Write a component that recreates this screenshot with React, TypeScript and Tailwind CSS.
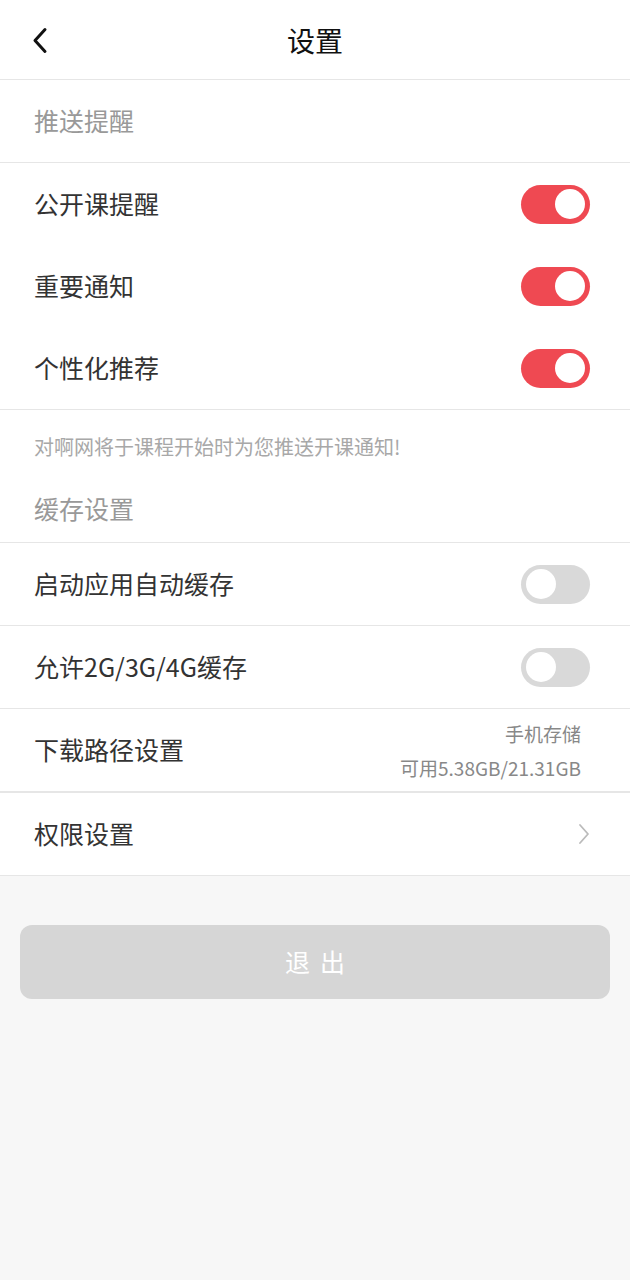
import React from 'react';

const FONT = { fontFamily: '"Noto Sans CJK SC", "Noto Sans", sans-serif' };

function Toggle({ on }: { on: boolean }) {
  return (
    <div
      className={`w-[69px] h-[39px] rounded-full flex items-center px-[5px] shrink-0 ${
        on ? 'bg-[#ef4952] justify-end' : 'bg-[#d9d9d9] justify-start'
      }`}
    >
      <div className="w-[30px] h-[30px] rounded-full bg-white" />
    </div>
  );
}

function SwitchRow({ label, on }: { label: string; on: boolean }) {
  return (
    <div className="h-[82px] flex items-center justify-between pl-[34px] pr-[40px]">
      <span className="text-[25px] text-[#333]">{label}</span>
      <Toggle on={on} />
    </div>
  );
}

export default function App() {
  return (
    <div className="min-h-[1280px] bg-[#f7f7f7]" style={FONT}>
      {/* Header */}
      <div className="relative h-[80px] bg-white border-b border-[#e6e6e6] flex items-center justify-center">
        <svg className="absolute left-[31px] top-[27px] w-[18px] h-[27px]" viewBox="0 0 18 27" fill="none">
          <path d="M14 2.5 L4 13.5 L14 24.5" stroke="#111" strokeWidth="3" strokeLinecap="round" strokeLinejoin="round" />
        </svg>
        <span className="text-[28px] text-[#111]">设置</span>
      </div>

      <div className="bg-white">
        {/* Push */}
        <div className="h-[83px] flex items-center pl-[34px] border-b border-[#e6e6e6]">
          <span className="text-[25px] text-[#999]">推送提醒</span>
        </div>
        <div className="border-b border-[#e6e6e6]">
          <SwitchRow label="公开课提醒" on />
          <SwitchRow label="重要通知" on />
          <SwitchRow label="个性化推荐" on />
        </div>

        {/* Note + cache header */}
        <div className="border-b border-[#e6e6e6] pl-[34px]">
          <div className="h-[72px] flex items-center pt-[2px]">
            <span className="text-[20px] text-[#a8a8a8]">对啊网将于课程开始时为您推送开课通知!</span>
          </div>
          <div className="h-[60px] flex items-center pb-[6px]">
            <span className="text-[25px] text-[#999]">缓存设置</span>
          </div>
        </div>

        <div className="border-b border-[#e6e6e6]">
          <SwitchRow label="启动应用自动缓存" on={false} />
        </div>
        <div className="border-b border-[#e6e6e6]">
          <SwitchRow label="允许2G/3G/4G缓存" on={false} />
        </div>

        {/* Download path */}
        <div className="h-[84px] flex items-center justify-between pl-[34px] pr-[49px] border-b-2 border-[#e6e6e6]">
          <span className="text-[25px] text-[#333]">下载路径设置</span>
          <div className="flex flex-col items-end gap-[15px] text-[19px] text-[#888] leading-none">
            <span>手机存储</span>
            <span>可用5.38GB/21.31GB</span>
          </div>
        </div>

        {/* Permissions */}
        <div className="h-[83px] flex items-center justify-between pl-[34px] pr-[40px] border-b border-[#e6e6e6]">
          <span className="text-[25px] text-[#333]">权限设置</span>
          <svg className="w-[12px] h-[22px]" viewBox="0 0 12 22" fill="none">
            <path d="M2 2 L10 11 L2 20" stroke="#bbb" strokeWidth="1.8" strokeLinecap="round" strokeLinejoin="round" />
          </svg>
        </div>
      </div>

      {/* Logout */}
      <div className="px-[20px] pt-[49px]">
        <button className="w-full h-[74px] rounded-[12px] bg-[#d6d6d6] text-white text-[25px] flex items-center justify-center gap-[10px]">
          <span>退</span>
          <span>出</span>
        </button>
      </div>
    </div>
  );
}
